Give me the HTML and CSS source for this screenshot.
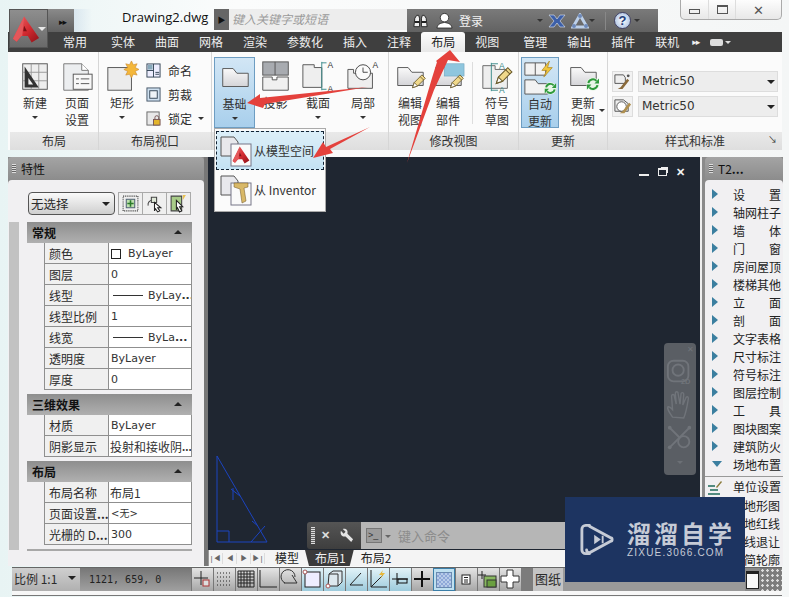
FILE: index.html
```html
<!DOCTYPE html>
<html lang="zh">
<head>
<meta charset="utf-8">
<title>Drawing2.dwg</title>
<link rel="stylesheet" href="styles.css">
</head>
<body>
<svg class="defs" width="0" height="0">
  <defs>
    <linearGradient id="redg" x1="0" y1="0" x2="1" y2="1"><stop offset="0" stop-color="#ee6a6c"/><stop offset=".55" stop-color="#d22a30"/><stop offset="1" stop-color="#8e1218"/></linearGradient>
    <linearGradient id="sheetg" x1="0" y1="0" x2="0" y2="1"><stop offset="0" stop-color="#fafafa"/><stop offset="1" stop-color="#d4d4d8"/></linearGradient>
    <symbol id="sheet" viewBox="0 0 36 36"><path d="M5 8h11l4 5h12v14H5z" fill="url(#sheetg)" stroke="#555" stroke-width="1"/></symbol>
    <symbol id="pencil" viewBox="0 0 20 20"><path d="M3 17l2-6L14 2l4 4-9 9z" fill="#f0d88a" stroke="#6a5a2a"/><path d="M3 17l2-6 4 4z" fill="#fff" stroke="#6a5a2a"/><path d="M12 4l4 4" stroke="#6a5a2a"/></symbol>
    <symbol id="refresh" viewBox="0 0 14 14"><circle cx="7" cy="7" r="6.500" fill="#e8f5e8"/><path d="M2.500 6A4.600 4.600 0 0 1 10.500 3.800" fill="none" stroke="#2f9a3c" stroke-width="2"/><path d="M13 1.500v5H8.500z" fill="#2f9a3c"/><path d="M11.500 8A4.600 4.600 0 0 1 3.500 10.200" fill="none" stroke="#2f9a3c" stroke-width="2"/><path d="M1 12.500v-5h4.500z" fill="#2f9a3c"/></symbol>
    <symbol id="acad" viewBox="0 0 30 30"><path d="M13 1L29 24l-8 5-4-7H10l-5 6-4-3z" fill="url(#redg)"/><path d="M13 1L1 25l4 3 5-6h1z" fill="#e4575a"/><path d="M13 11l-1 6h4z" fill="#7c1216"/></symbol>
  </defs>
</svg>
<div class="window">
  <header class="titlebar">
    <div class="app-button"><svg class="app-a" viewBox="0 0 30 30"><use href="#acad"/></svg><span class="app-caret"></span></div>
    <div class="qat"><span class="chevrons">&#9656;&#9656;</span></div>
    <div class="doc-title">Drawing2.dwg</div>
    <div class="search-arrow"><span>&#9654;</span></div>
    <div class="search">键入关键字或短语</div>
    <div class="infocenter">
      <svg class="ic-bino" viewBox="0 0 18 16"><path d="M2 14l1-9 2-3h2l1 3v9zM10 14V5l1-3h2l2 3 1 9z" fill="#eee" stroke="#222"/><path d="M3 9h5M10 9h5" stroke="#222" stroke-width="2"/></svg>
      <svg class="ic-user" viewBox="0 0 18 18"><circle cx="9" cy="6" r="4.500" fill="#fff" stroke="#333"/><path d="M1 17c1-5 4-5 8-6 4 1 7 1 8 6z" fill="#fff" stroke="#333"/></svg>
      <span class="login">登录</span>
      <span class="mini-caret first"></span>
      <svg class="ic-x" viewBox="0 0 18 14"><path d="M1 1h5l3 4 3-4h5l-5 6 5 6h-5l-3-4-3 4H1l5-6z" fill="#3c5fa8" stroke="#dfe7f5" stroke-width=".6"/></svg>
      <svg class="ic-tri" viewBox="0 0 18 16"><path d="M9 2L2 14h14z" fill="none" stroke="#bcd0ea" stroke-width="3"/><circle cx="9" cy="3" r="2" fill="#6d88b8"/><circle cx="3" cy="13" r="2" fill="#6d88b8"/><circle cx="15" cy="13" r="2" fill="#6d88b8"/></svg>
      <span class="mini-caret"></span>
      <span class="ic-sep"></span>
      <span class="help">?</span>
      <span class="mini-caret"></span>
    </div>
    <div class="wincontrols">
      <div class="wc wc-min"><span></span></div>
      <div class="wc wc-max"><span></span></div>
      <div class="wc wc-close">&#10005;</div>
    </div>
  </header>

  <nav class="tabs">
    <span class="tab sp">常用</span><span class="tab">实体</span><span class="tab">曲面</span><span class="tab">网格</span><span class="tab">渲染</span><span class="tab">参数化</span><span class="tab">插入</span><span class="tab">注释</span><span class="tab active">布局</span><span class="tab sp">视图</span><span class="tab">管理</span><span class="tab">输出</span><span class="tab">插件</span><span class="tab">联机</span>
    <span class="tab-more">&#9656;&#9656;</span><span class="tab-pill"></span><span class="mini-caret white"></span>
  </nav>

  <section class="ribbon">
    <div class="panel p1">
      <div class="panel-body">
        <div class="big w38"><svg class="bigicon" viewBox="0 0 36 36"><rect x="5" y="4" width="26" height="27" fill="#eee" stroke="#555"/><path d="M14 4v27M22 4v27M5 13h26M5 22h26" stroke="#999"/><path d="M7 7l15 22H7z" fill="#333"/><path d="M11 19l5 7h-5z" fill="#eee"/></svg><span class="lbl">新建</span><i class="caret"></i></div>
        <div class="big w38 ml4"><svg class="bigicon" viewBox="0 0 36 36"><path d="M4 4h19l7 7v21H4z" fill="#eceef0" stroke="#777"/><path d="M23 4v7h7" fill="#fff" stroke="#777"/><rect x="14" y="15" width="20" height="16" fill="#f8f8f8" stroke="#555"/><path d="M17 20h3M22 20h9M17 25h3M22 25h9" stroke="#555"/></svg><span class="lbl">页面<br>设置</span></div>
      </div>
      <div class="panel-title">布局</div>
    </div>
    <div class="panel p2">
      <div class="panel-body">
        <div class="big w38"><svg class="bigicon" viewBox="0 0 36 36"><rect x="3" y="8" width="25" height="24" fill="#ececec" stroke="#555"/><path d="M28 1l2 4 4-1-2 4 4 2-4 2 2 4-4-1-2 4-2-4-4 1 2-4-4-2 4-2-2-4 4 1z" fill="#f4b73a" stroke="#c8842a" stroke-width=".6"/></svg><span class="lbl">矩形</span><i class="caret"></i></div>
        <div class="smalls">
          <div class="small"><svg class="sic" viewBox="0 0 16 16"><rect x="1" y="1" width="14" height="14" fill="#eef" stroke="#345"/><path d="M1 8h7M8 1v14M10 10h4M10 12h4" stroke="#345"/><rect x="2" y="2" width="5" height="5" fill="#8ab"/></svg><span>命名</span></div>
          <div class="small"><svg class="sic" viewBox="0 0 16 16"><rect x="1" y="1" width="14" height="14" fill="#cfe0f0" stroke="#456"/><rect x="4" y="4" width="8" height="8" fill="#eef3f8" stroke="#345"/></svg><span>剪裁</span></div>
          <div class="small"><svg class="sic" viewBox="0 0 16 16"><rect x="1" y="1" width="13" height="14" fill="#e8e8e8" stroke="#666"/><rect x="8" y="9" width="7" height="6" fill="#e3b52c" stroke="#755"/><path d="M9.500 9V7a2 2 0 0 1 4 0v2" fill="none" stroke="#755"/></svg><span>锁定</span><i class="caret side"></i></div>
        </div>
      </div>
      <div class="panel-title">布局视口</div>
    </div>
    <div class="panel p3">
      <div class="panel-body">
        <div class="big w41 lit"><svg class="bigicon" viewBox="0 0 36 36"><use href="#sheet"/></svg><span class="lbl">基础</span><i class="caret"></i></div>
        <div class="big w41"><svg class="bigicon" viewBox="0 0 36 36"><rect x="4" y="2" width="27" height="14" fill="#a8abb0" stroke="#555"/><path d="M17 2v14" stroke="#555"/><path d="M4 18h10v3h5v-3h12v14H4z" fill="#f0f0f0" stroke="#555"/></svg><span class="lbl">投影</span></div>
        <div class="big w44"><svg class="bigicon" viewBox="0 0 36 36"><path d="M2 5h12v3h8v21H2z" fill="#eee" stroke="#555"/><path d="M22 2v30" stroke="#3a8a8a"/><path d="M22 3h5M22 31h5" stroke="#3a8a8a"/><text x="28" y="8" class="svgmini">A</text><text x="28" y="34" class="svgmini">A</text></svg><span class="lbl">截面</span><i class="caret"></i></div>
        <div class="big w46"><svg class="bigicon" viewBox="0 0 36 36"><path d="M2 10h6v4h20v16H2z" fill="#eee" stroke="#555"/><circle cx="18" cy="13" r="8" fill="#fbfbfb" stroke="#444"/><path d="M18 8v5h5" fill="none" stroke="#444"/><text x="28" y="8" class="svgmini">A</text></svg><span class="lbl">局部</span><i class="caret"></i></div>
      </div>
      <div class="panel-title"></div>
    </div>
    <div class="panel p4">
      <div class="panel-body">
        <div class="big w38"><svg class="bigicon" viewBox="0 0 36 36"><use href="#sheet"/><use href="#pencil" x="18" y="13" width="18" height="20"/></svg><span class="lbl">编辑<br>视图</span></div>
        <div class="big w38"><svg class="bigicon" viewBox="0 0 36 36"><use href="#sheet"/><rect x="14" y="4" width="21" height="13" fill="#8fc6de" stroke="#6ea4bc" stroke-width=".6"/><use href="#pencil" x="18" y="13" width="18" height="20"/></svg><span class="lbl">编辑<br>部件</span></div>
        <span class="vsep"></span>
        <div class="big w38"><svg class="bigicon" viewBox="0 0 36 36"><path d="M3 6h13v4h13v20H3z" fill="#eee" stroke="#666"/><path d="M12 3v30" stroke="#3a8a8a"/><path d="M12 4h7M12 32h7" stroke="#3a8a8a"/><text x="20" y="9" class="svgmini teal">A</text><text x="20" y="35" class="svgmini teal">A</text><use href="#pencil" x="14" y="6" width="22" height="22"/></svg><span class="lbl">符号<br>草图</span></div>
      </div>
      <div class="panel-title">修改视图</div>
    </div>
    <div class="panel p5">
      <div class="panel-body">
        <div class="big w38 lit"><svg class="bigicon" viewBox="0 0 36 36"><path d="M2 2h22v13H2zM13 2v13" fill="#f2f2f2" stroke="#555"/><path d="M28 0l-8 10h5l-3 7 9-10h-5z" fill="#f0c63c" stroke="#a8801c" stroke-width=".7"/><path d="M2 20h11l3 4h10v11H2z" fill="#f2f2f2" stroke="#555"/><use href="#refresh" x="22" y="22" width="14" height="14"/></svg><span class="lbl">自动<br>更新</span></div>
        <div class="big w40"><svg class="bigicon" viewBox="0 0 36 36"><use href="#sheet"/><use href="#refresh" x="21" y="18" width="15" height="15"/></svg><span class="lbl">更新<br>视图</span><i class="caret right"></i></div>
      </div>
      <div class="panel-title">更新</div>
    </div>
    <div class="panel p6">
      <div class="panel-body styles">
        <div class="style-row"><span class="style-icon"><svg viewBox="0 0 20 20"><path d="M2 3h9l2 3v6H2z" fill="#eee" stroke="#555"/><path d="M5 18l3-2 7-9 2 2-7 9z" fill="#8a6a3a"/><circle cx="16" cy="4" r="1.500" fill="#555"/></svg></span><div class="combo">Metric50<i class="combo-caret"></i></div></div>
        <div class="style-row"><span class="style-icon"><svg viewBox="0 0 20 20"><path d="M2 3h9l5 4v8H2z" fill="#eee" stroke="#555"/><circle cx="9" cy="10" r="5" fill="#fff" stroke="#555"/><path d="M7 17l3-2 7-9 2 2-7 9z" fill="#b09050"/></svg></span><div class="combo">Metric50<i class="combo-caret"></i></div></div>
      </div>
      <div class="panel-title">样式和标准<span class="launcher">&#8600;</span></div>
    </div>
  </section>

  <main class="workspace">
    <aside class="palette left-palette">
      <div class="pal-head"><span class="grip"></span><span>特性</span></div>
      <div class="pal-body props">
        <div class="selector">
          <div class="sel-box">无选择<i class="combo-caret"></i></div>
          <div class="sel-btns">
            <span class="sel-btn"><svg viewBox="0 0 18 18"><rect x="2" y="2" width="14" height="14" fill="none" stroke="#333" stroke-dasharray="1 1"/><rect x="5" y="5" width="8" height="8" fill="#bfe0b0" stroke="#567"/><path d="M9 6v6M6 9h6" stroke="#2a7a2a" stroke-width="1.500"/></svg></span>
            <span class="sel-btn"><svg viewBox="0 0 18 18"><path d="M3 11a4 4 0 0 1 4-5" fill="none" stroke="#444"/><path d="M6 3h5v5H6z" fill="#dfe8d8" stroke="#444"/><path d="M9 8l6 5-3 0 2 3-2 1-2-3-1 2z" fill="#fff" stroke="#222"/></svg></span>
            <span class="sel-btn"><svg viewBox="0 0 18 18"><path d="M2 2h10v14H2z" fill="#a8cc88" stroke="#444"/><path d="M7 6l6 6-3 0 2 4-2 1-2-4-1 2z" fill="#fff" stroke="#222"/><path d="M13 1l3 0-3 5z" fill="#e8c050"/></svg></span>
          </div>
        </div>
        <div class="prop-wrap">
          <div class="side-scroll"></div>
          <div class="prop-groups">
            <section class="group">
              <h3 class="group-head">常规<i class="up"></i></h3>
              <div class="row"><span class="k">颜色</span><span class="v"><i class="swatch"></i>ByLayer</span></div>
              <div class="row"><span class="k">图层</span><span class="v">0</span></div>
              <div class="row"><span class="k">线型</span><span class="v"><i class="dash"></i>ByLay<b>...</b></span></div>
              <div class="row"><span class="k">线型比例</span><span class="v">1</span></div>
              <div class="row"><span class="k">线宽</span><span class="v"><i class="dash"></i>ByLa<b>...</b></span></div>
              <div class="row"><span class="k">透明度</span><span class="v">ByLayer</span></div>
              <div class="row"><span class="k">厚度</span><span class="v">0</span></div>
            </section>
            <section class="group">
              <h3 class="group-head">三维效果<i class="up"></i></h3>
              <div class="row"><span class="k">材质</span><span class="v">ByLayer</span></div>
              <div class="row"><span class="k">阴影显示</span><span class="v cjk">投射和接收阴<b>...</b></span></div>
            </section>
            <section class="group">
              <h3 class="group-head">布局<i class="up"></i></h3>
              <div class="row"><span class="k">布局名称</span><span class="v cjk">布局1</span></div>
              <div class="row"><span class="k">页面设置<b>...</b></span><span class="v small-v">&lt;无&gt;</span></div>
              <div class="row"><span class="k">光栅的 D<b>...</b></span><span class="v">300</span></div>
            </section>
            <div class="group-end"></div>
          </div>
        </div>
      </div>
    </aside>

    <div class="center">
      <div class="canvas">
        <div class="vp-controls"><span class="vp-min"></span><span class="vp-max"></span><span class="vp-close">&#10005;</span></div>
        <svg class="ucs" viewBox="0 0 54 90"><path d="M1 1L51 87H1zM1 76h12v11M35 87l14-16M24 41l-9-7M17 33v12M36 66l6 5" fill="none" stroke="#1c44c0" stroke-width="1"/></svg>
        <div class="navbar">
          <span class="nb-close">&#10005;</span>
          <svg class="nb-i" viewBox="0 0 30 30"><rect x="2" y="3" width="22" height="22" rx="6" fill="none" stroke="#70747a" stroke-width="2"/><circle cx="13" cy="13" r="6" fill="none" stroke="#70747a" stroke-width="2"/><text x="16" y="28" class="nb-t">2D</text></svg>
          <svg class="nb-i" viewBox="0 0 30 30"><path d="M7 28c-4-6-6-9-5-11 2-1 4 2 5 3L6 6c0-3 3-3 3 0l2 8-1-11c0-3 3-3 3 0l2 11 1-10c0-3 3-3 3 0l-1 11 3-7c1-3 3-2 3 0-1 6-2 14-5 21z" fill="none" stroke="#70747a" stroke-width="1.500"/></svg>
          <svg class="nb-i" viewBox="0 0 30 30"><path d="M4 4l19 19M25 4L4 25" stroke="#70747a" stroke-width="2"/><circle cx="4" cy="4" r="2" fill="#70747a"/><circle cx="25" cy="4" r="2" fill="#70747a"/><circle cx="4" cy="25" r="2" fill="#70747a"/><circle cx="19" cy="19" r="6" fill="#5a5e64" stroke="#70747a" stroke-width="2"/></svg>
          <span class="nb-caret"></span>
        </div>
        <div class="cmdline">
          <div class="cmd-left"><span class="grip cmd-grip"></span><span class="cmd-x">&#10005;</span><svg class="cmd-wrench" viewBox="0 0 16 16"><path d="M2 3l3 3 2-2-3-3c3-1 6 1 5 5l6 6-2 3-6-6c-4 1-6-2-5-6z" fill="#e4e4e4"/></svg></div>
          <div class="cmd-right"><span class="cmd-prompt">&gt;_</span><i class="cmd-caret"></i><span class="cmd-text">键入命令</span></div>
        </div>
      </div>
      <div class="layout-tabs">
        <span class="lnav">|&#9664;</span><span class="lnav">&#9664;</span><span class="lnav">&#9654;</span><span class="lnav">&#9654;|</span>
        <span class="ltab first">模型</span><span class="ltab on">布局1</span><span class="ltab last">布局2</span>
      </div>
    </div>

    <aside class="palette right-palette">
      <div class="pal-head"><span class="grip"></span><span>T2<b>...</b></span></div>
      <ul class="pal-body tool-list">
        <li><i></i><span class="just">设<em>置</em></span></li>
        <li><i></i><span>轴网柱子</span></li>
        <li><i></i><span class="just">墙<em>体</em></span></li>
        <li><i></i><span class="just">门<em>窗</em></span></li>
        <li><i></i><span>房间屋顶</span></li>
        <li><i></i><span>楼梯其他</span></li>
        <li><i></i><span class="just">立<em>面</em></span></li>
        <li><i></i><span class="just">剖<em>面</em></span></li>
        <li><i></i><span>文字表格</span></li>
        <li><i></i><span>尺寸标注</span></li>
        <li><i></i><span>符号标注</span></li>
        <li><i></i><span>图层控制</span></li>
        <li><i></i><span class="just">工<em>具</em></span></li>
        <li><i></i><span>图块图案</span></li>
        <li><i></i><span>建筑防火</span></li>
        <li class="open"><i></i><span>场地布置</span></li>
        <li class="sep"><svg class="unit-ic" viewBox="0 0 16 16"><path d="M1 7h7M1 15h12M3 11h8" stroke="#1e6a5a" stroke-width="1.500"/><path d="M9 8l5-6 1 1-5 6z" fill="#8a7a3a"/></svg><span>单位设置</span></li>
        <li class="plain"><span>地形图</span></li>
        <li class="plain"><span>地红线</span></li>
        <li class="plain"><span>线退让</span></li>
        <li class="plain"><span>简轮廓</span></li>
      </ul>
    </aside>
  </main>

  <footer class="statusbar">
    <div class="scale">比例 1:1<i class="combo-caret"></i></div>
    <div class="coords">1121, 659, 0</div>
    <div class="sb"><svg viewBox="0 0 22 22"><path d="M10 3v14M3 10h14" stroke="#222"/><rect x="12" y="12" width="6" height="6" fill="#ddd" stroke="#a33"/></svg></div>
    <div class="sb"><svg viewBox="0 0 22 22"><path d="M4 5h14M4 9h14M4 13h14M4 17h14" stroke="#222" stroke-dasharray="1 2"/></svg></div>
    <div class="sb"><svg viewBox="0 0 22 22"><path d="M3 3h16v16H3zM6 3v16M9 3v16M12 3v16M15 3v16M3 6h16M3 9h16M3 12h16M3 15h16" fill="none" stroke="#222"/></svg></div>
    <div class="sb"><svg viewBox="0 0 22 22"><path d="M3 2v17h17" fill="none" stroke="#222"/></svg></div>
    <div class="sb"><svg viewBox="0 0 22 22"><path d="M6 15a7 7 0 1 1 10-6M5 15h13L13 7" fill="none" stroke="#333"/></svg></div>
    <div class="sb blue"><svg viewBox="0 0 22 22"><rect x="4" y="4" width="15" height="15" fill="#eef" stroke="#222"/><circle cx="4" cy="4" r="2" fill="#fff" stroke="#a55"/></svg></div>
    <div class="sb blue"><svg viewBox="0 0 22 22"><path d="M6 6l4-3h9v11l-4 4H5z" fill="#dde8ee" stroke="#333"/><path d="M6 6h9v12" fill="none" stroke="#333"/><circle cx="5" cy="18" r="2" fill="#fff" stroke="#a55"/></svg></div>
    <div class="sb blue"><svg viewBox="0 0 22 22"><path d="M16 5L5 17h13" fill="none" stroke="#222"/></svg></div>
    <div class="sb blue"><svg viewBox="0 0 22 22"><path d="M4 2v17h16M4 19L16 7" fill="none" stroke="#222"/><path d="M16 2l-4 5h3l-2 4 5-6h-3z" fill="#e8b838"/></svg></div>
    <div class="sb blue"><svg viewBox="0 0 22 22"><path d="M8 5v12M3 11h16" stroke="#111"/><rect x="9" y="11" width="9" height="4" fill="none" stroke="#111"/></svg></div>
    <div class="sb"><svg viewBox="0 0 22 22"><path d="M11 3v16M3 11h16" stroke="#111" stroke-width="2"/></svg></div>
    <div class="sb lit-box"><span></span></div>
    <div class="sb"><svg viewBox="0 0 22 22"><rect x="7" y="7" width="8" height="9" fill="#fff" stroke="#222"/><path d="M9 9.500h4M9 12h4M9 14h4" stroke="#222"/></svg></div>
    <div class="sb"><svg viewBox="0 0 22 22"><path d="M5 3v8M1 7h8" stroke="#222"/><rect x="7" y="8" width="12" height="11" fill="#88b860" stroke="#333"/><rect x="10" y="12" width="9" height="7" fill="#6aa040" stroke="#333"/></svg></div>
    <div class="sb"><svg viewBox="0 0 22 22"><path d="M8 2h6v6h6v6h-6v6H8v-6H2V8h6z" fill="#fff" stroke="#333"/></svg></div>
    <div class="sb-gap"></div>
    <div class="paper">图纸</div>
    <div class="sb-fill"></div>
    <div class="sb-window"><span></span></div>
    <div class="sb-grip"></div>
  </footer>

  <div class="popup">
    <div class="pop-item hot"><svg class="pop-ic" viewBox="0 0 34 32"><path d="M2 2h13l4 5v14H2z" fill="#e8e8ec" stroke="#555"/><rect x="12" y="9" width="20" height="22" fill="#fafafa" stroke="#778"/><use href="#acad" x="13" y="10" width="18" height="20"/></svg><span>从模型空间</span></div>
    <div class="pop-item"><svg class="pop-ic" viewBox="0 0 34 32"><path d="M2 2h13l4 5v14H2z" fill="#e8e8ec" stroke="#555"/><rect x="12" y="9" width="20" height="22" fill="#fafafa" stroke="#778"/><path d="M15 9h14v4l-4 1 2 13-4 2-2-14-6-2z" fill="#d8b868" stroke="#6a5020" stroke-width=".5"/></svg><span>从 Inventor</span></div>
  </div>

  <svg class="arrows" viewBox="0 0 789 597">
    <path d="M247 103L260 94l0 4 108-11-103 17-2 4z"/>
    <path d="M313 158L323 142l3 5 44-20-40 22 3 4z"/>
    <path d="M407 163L432 78l5-16-1-1 14-11 10 12-12-2-14 30z"/>
  </svg>

  <div class="watermark">
    <svg class="wm-logo" viewBox="0 0 36 34"><path d="M10 2H6a4 4 0 0 0-4 4v22a4 4 0 0 0 4 4h4" fill="none" stroke="#c6cbd6" stroke-width="3" stroke-linecap="round"/><path d="M10 3l22 12a2 2 0 0 1 0 4L10 31a3 3 0 0 1-3-3" fill="none" stroke="#c6cbd6" stroke-width="3" stroke-linecap="round"/><path d="M15 12l7 5-7 5z" fill="#c6cbd6"/><path d="M24 13v8" stroke="#c6cbd6" stroke-width="2"/></svg>
    <div class="wm-text"><div class="wm-cn">溜溜自学</div><div class="wm-en">ZIXUE.3066.COM</div></div>
  </div>
</div>
</body>
</html>
```

FILE: styles.css
```css
* { box-sizing: border-box; }
html, body { margin: 0; padding: 0; }
body { width: 789px; height: 597px; overflow: hidden; background: #f2f6f6; font-family: "Noto Sans CJK SC", "Liberation Sans", sans-serif; font-size: 12px; color: #2b2b2b; }
.defs { position: absolute; }
i { display: block; font-style: normal; }
.svgmini { font: 9px "Liberation Sans", sans-serif; fill: #333; }
.svgmini.teal { fill: #3a8a8a; }

.window { position: relative; width: 789px; height: 597px; padding: 9px 7px 0 8px; display: flex; flex-direction: column; overflow: hidden; background: linear-gradient(90deg, #e8f4f4, #fbfcfc 30%, #f4f6f6); }

/* title bar */
.titlebar { height: 23px; display: flex; align-items: flex-start; position: relative; flex: none; }
.app-button { position: absolute; left: 1px; top: 0; width: 39px; height: 39px; background: linear-gradient(#8e8e8e, #6a6a6a); border: 1px solid #555; z-index: 3; }
.app-a { position: absolute; left: 2px; top: 2px; width: 28px; height: 35px; }
.app-caret { position: absolute; right: 1px; top: 17px; border: 4px solid transparent; border-top-color: #e8e8e8; }
.qat { margin-left: 40px; width: 44px; height: 23px; background: linear-gradient(#8a8a8a, #606060) 0 0 / 26px 100% no-repeat, linear-gradient(90deg, #bcd0e4, transparent); padding: 5px 0 0 11px; flex: none; line-height: 12px; }
.chevrons { font: 9px/12px "DejaVu Sans", sans-serif; letter-spacing: -1px; color: #111; }
.doc-title { margin-left: 30px; width: 92px; font: 13px/16px "Open Sans", "Liberation Sans", sans-serif; color: #111; flex: none; }
.search-arrow { width: 15px; height: 21px; background: #666; color: #111; font-size: 8px; text-align: center; line-height: 21px; flex: none; }
.search { width: 178px; height: 21px; background: #ededed; color: #9a9a9a; font-style: italic; line-height: 20px; padding-left: 3px; flex: none; }
.infocenter { width: 251px; height: 23px; background: linear-gradient(#7a7a7a, #626262); display: flex; align-items: center; flex: none; position: relative; }
.ic-bino { width: 17px; height: 16px; margin-left: 5px; flex: none; }
.ic-user { width: 17px; height: 17px; margin-left: 7px; flex: none; }
.login { color: #f2f2f2; margin-left: 6px; width: 78px; flex: none; }
.mini-caret { width: 0; height: 0; border: 3px solid transparent; border-top-color: #333; margin: 3px 0 0 0; flex: none; }
.mini-caret.first { margin-right: 5px; }
.mini-caret.white { border-top-color: #ddd; }
.ic-x { width: 18px; height: 14px; flex: none; }
.ic-tri { width: 18px; height: 16px; margin-left: 5px; flex: none; }
.ic-sep { width: 1px; height: 18px; background: #888; margin: 0 8px 0 10px; flex: none; }
.help { width: 17px; height: 17px; border-radius: 50%; background: radial-gradient(#fff, #9bb6dc); border: 1px solid #446; color: #26407a; font: bold 13px/15px "Liberation Sans", sans-serif; text-align: center; margin-right: 3px; flex: none; }
.wincontrols { position: absolute; left: 672px; top: -9px; width: 102px; height: 20px; display: flex; background: linear-gradient(#fdfdfd, #e8e8e8); border: 1px solid #aaa; border-top: 0; border-radius: 0 0 5px 5px; }
.wc { border-right: 1px solid #ddd; display: flex; align-items: center; justify-content: center; color: #555; }
.wc-min { width: 28px; }
.wc-max { width: 27px; }
.wc-close { flex: 1; border: 0; font-size: 13px; }
.wc-min span { width: 11px; height: 5px; border: 1px solid #555; margin-top: 4px; }
.wc-max span { width: 11px; height: 9px; border: 1px solid #555; border-top-width: 2px; }

/* tabs */
.tabs { height: 20px; flex: none; background: #3f3f3f; padding-left: 45px; display: flex; align-items: center; color: #eee; line-height: 20px; }
.tab { padding: 0 10px; flex: none; height: 20px; }
.tab.sp { margin-right: 4px; }
.tab.active { background: linear-gradient(#fdfdfd, #e8e8e8); color: #222; border-radius: 3px 3px 0 0; }
.tab-more { font: 9px/12px "DejaVu Sans", sans-serif; letter-spacing: -1px; margin-left: 3px; color: #eee; }
.tab-pill { width: 13px; height: 7px; background: #ddd; border-radius: 2px; margin: 0 2px 0 11px; }

/* ribbon */
.ribbon { height: 98px; flex: none; display: flex; background: #fbfbfb; padding-left: 2px; }
.panel { display: flex; flex-direction: column; border-right: 1px solid #d6d6d6; flex: none; }
.p1 { width: 89px; }
.p2 { width: 113px; }
.p3 { width: 177px; }
.p4 { width: 130px; }
.p5 { width: 89px; }
.p6 { width: 174px; border: 0; }
.panel-body { flex: 1; display: flex; align-items: flex-start; padding: 5px 2px 0; min-height: 0; }
.p1 .panel-body { padding-left: 6px; }
.p2 .panel-body { padding-left: 4px; }
.panel-title { height: 18px; background: linear-gradient(#e9e9e9, #dedede); text-align: center; line-height: 18px; color: #333; position: relative; flex: none; }
.launcher { position: absolute; right: 5px; top: -1px; font-size: 9px; }
.big { flex: none; height: 71px; display: flex; flex-direction: column; align-items: center; text-align: center; position: relative; }
.w38 { width: 38px; } .w40 { width: 40px; } .w41 { width: 41px; } .w44 { width: 44px; } .w46 { width: 46px; }
.ml4 { margin-left: 4px; }
.bigicon { width: 34px; height: 34px; flex: none; margin-top: 3px; }
.lbl { line-height: 17px; font-size: 12px; color: #333; }
.caret { width: 0; height: 0; border: 3px solid transparent; border-top-color: #333; margin-top: 5px; }
.caret.side { margin: 3px 0 0 6px; }
.caret.right { position: absolute; right: -2px; top: 47px; }
.lit { background: linear-gradient(#d2e6f5, #a8cfec); border: 1px solid #6d9dc2; }
.vsep { width: 1px; height: 62px; background: #ddd; margin: 5px 5px 0 5px; flex: none; }
.p5 .w40 { margin-left: 4px; }
.smalls { margin-left: 5px; padding-top: 1px; display: flex; flex-direction: column; }
.small { height: 24px; display: flex; align-items: center; white-space: nowrap; }
.sic { width: 15px; height: 15px; margin-right: 7px; flex: none; }
.styles { flex-direction: column; padding: 19px 0 0 4px; gap: 4px; }
.style-row { display: flex; align-items: center; gap: 5px; height: 21px; }
.style-icon { width: 21px; height: 21px; border: 1px solid #ddd; background: #f2f2f2; display: block; }
.style-icon svg { width: 19px; height: 19px; display: block; }
.combo { width: 140px; height: 21px; background: #ededed; border: 1px solid #ddd; font: 12px/19px "DejaVu Sans", sans-serif; padding-left: 3px; color: #333; position: relative; }
.combo-caret { position: absolute; right: 2px; top: 8px; border: 4px solid transparent; border-top-color: #222; border-bottom: 0; width: 0; height: 0; }

/* workspace */
.workspace { margin-top: 7px; flex: none; height: 409px; display: flex; position: relative; background: #8a8a8a; }
.palette { flex: none; display: flex; flex-direction: column; background: #8a8a8a; }
.left-palette { width: 200px; border-right: 4px solid #777; }
.right-palette { width: 78px; margin-left: 3px; }
.pal-head { height: 23px; display: flex; align-items: center; padding-left: 4px; background: linear-gradient(#a4a4a4, #8c8c8c); color: #111; flex: none; border-radius: 4px 4px 0 0; font: 12px "Noto Sans CJK SC", sans-serif; }
.grip { width: 4px; height: 9px; margin-right: 5px; flex: none; background: repeating-linear-gradient(#ddd 0 1px, #666 1px 2px); }
.pal-body { flex: 1; background: #f1f0f2; border-radius: 4px 4px 0 0; margin: 0 1px 0 0; min-height: 0; }
.pal-head b, .row b, .v b { font-weight: bold; }
.props { display: flex; flex-direction: column; margin: 0; }
.selector { display: flex; padding: 12px 0 0 20px; height: 42px; flex: none; }
.sel-box { width: 87px; height: 23px; border: 1px solid #555; border-radius: 4px; background: linear-gradient(#fafafa, #cfcfcf); line-height: 21px; padding-left: 2px; position: relative; font-size: 12.500px; }
.sel-box .combo-caret { right: 4px; top: 9px; }
.sel-btns { display: flex; margin-left: 3px; }
.sel-btn { width: 25px; height: 23px; border: 1px solid #aaa; margin-right: -1px; background: #efefef; display: block; }
.sel-btn svg { display: block; width: 19px; height: 19px; margin: 1px auto; }
.prop-wrap { display: flex; flex: 1; min-height: 0; }
.side-scroll { width: 10px; margin: 0 8px 11px 1px; height: 328px; background: #c2c2c2; flex: none; }
.prop-groups { width: 165px; flex: none; }
.group { margin-bottom: 4px; }
.group-head { height: 21px; margin: 0; background: linear-gradient(#8e8e8e, #b0b0b0); font: bold 12px/21px "Noto Sans CJK SC", sans-serif; padding-left: 5px; color: #111; position: relative; }
.up { position: absolute; right: 10px; top: 8px; border: 4px solid transparent; border-bottom-color: #222; border-top: 0; width: 0; height: 0; }
.row { height: 21px; margin-left: 17px; display: flex; border: 1px solid #8f8f8f; border-top: 0; background: #fff; line-height: 21px; white-space: nowrap; overflow: hidden; }
.k { width: 64px; flex: none; background: #f0f0f0; border-right: 1px solid #8f8f8f; padding-left: 4px; overflow: hidden; }
.v { flex: 1; padding: 1px 0 0 2px; font-family: "DejaVu Sans", "Noto Sans CJK SC", sans-serif; font-size: 11px; display: flex; align-items: center; overflow: hidden; color: #333; }
.v.cjk { font-family: "Noto Sans CJK SC", sans-serif; font-size: 12px; padding-left: 1px; }
.v.cjk b { font-size: 10px; }
.small-v { font-size: 10px; }
.swatch { width: 10px; height: 10px; border: 1px solid #222; background: #fff; margin: 0 7px 0 0; }
.dash { width: 30px; height: 1px; background: #333; margin: 0 5px 0 2px; flex: none; }
.group-end { height: 2px; background: #a8a8a8; }

/* center */
.center { width: 494px; flex: none; display: flex; flex-direction: column; border-right: 2px solid #eee; }
.canvas { height: 393px; background: #1f2631; position: relative; flex: none; }
.vp-controls { position: absolute; left: 431px; top: 10px; display: flex; align-items: center; gap: 9px; color: #f2f2f2; }
.vp-min { width: 10px; height: 2px; background: #eee; margin-top: 6px; }
.vp-max { width: 9px; height: 8px; border: 1px solid #eee; border-top-width: 2px; box-shadow: 2px -2px 0 -1px #eee; }
.vp-close { font: bold 11px/10px "Liberation Sans", sans-serif; }
.ucs { position: absolute; left: 8px; top: 298px; width: 54px; height: 90px; }
.navbar { position: absolute; left: 456px; top: 186px; width: 32px; height: 132px; background: #5a5e64; border-radius: 4px; display: flex; flex-direction: column; align-items: center; padding-top: 15px; gap: 5px; }
.nb-close { position: absolute; right: 2px; top: 0; font-size: 8px; color: #70747a; }
.nb-i { width: 28px; height: 28px; flex: none; }
.nb-t { font: bold 8px "Liberation Sans", sans-serif; fill: #70747a; }
.nb-caret { border: 3px solid transparent; border-top-color: #6c7076; margin-top: 4px; }
.cmdline { position: absolute; left: 99px; top: 365px; width: 390px; height: 27px; display: flex; }
.cmd-left { width: 54px; flex: none; background: linear-gradient(#555, #3e3e3e); display: flex; align-items: center; padding-left: 4px; border-radius: 3px 0 0 3px; }
.cmd-grip { height: 17px; margin-right: 6px; }
.cmd-x { color: #ddd; font: bold 11px "Liberation Sans", sans-serif; }
.cmd-wrench { width: 15px; height: 15px; margin-left: 9px; flex: none; }
.cmd-right { flex: 1; background: #b6b6b6; display: flex; align-items: center; padding-left: 5px; color: #8a8a8a; }
.cmd-prompt { width: 16px; height: 15px; border: 1px solid #777; background: #9c9c9c; font: 9px/13px "Liberation Sans", sans-serif; color: #333; padding-left: 1px; }
.cmd-caret { border: 3px solid transparent; border-top-color: #666; margin: 4px 0 0 3px; }
.cmd-text { margin-left: 7px; font-size: 13px; color: #8c8c8c; }
.layout-tabs { flex: none; height: 16px; background: #f4f4f4; display: flex; align-items: center; border-left: 1px solid #999; color: #222; overflow: hidden; }
.lnav { width: 14px; font: 8px "Liberation Sans", sans-serif; color: #666; text-align: center; flex: none; border-right: 1px solid #ddd; }
.ltab { padding: 0 8px; height: 16px; line-height: 15px; flex: none; }
.ltab.first { margin-left: 2px; padding-right: 6px; }
.ltab.last { padding-left: 7px; }
.ltab.on { background: #3a3a3a; color: #f0f0f0; padding: 0 8px 0 10px; clip-path: polygon(0 0, 100% 0, calc(100% - 4px) 100%, 4px 100%); }

/* tool palette */
.tool-list { list-style: none; padding: 5px 0 0 0; margin: 0; overflow: hidden; font-size: 12px; }
.tool-list li { height: 18px; display: flex; align-items: center; padding-left: 7px; white-space: nowrap; color: #222; }
.tool-list li i { width: 0; height: 0; border: 5px solid transparent; border-left: 6px solid #3b7fa0; border-right: 0; flex: none; margin-right: 15px; }
.tool-list li.open i { border: 5px solid transparent; border-top: 6px solid #3b7fa0; border-bottom: 0; margin-right: 11px; }
.just { width: 48px; display: flex; justify-content: space-between; flex: none; }
.just em { font-style: normal; }
.tool-list li.sep { border-top: 1px solid #999; margin-top: 3px; height: 20px; padding-left: 2px; }
.unit-ic { width: 16px; height: 16px; margin-right: 10px; flex: none; }
.tool-list li.plain { padding-left: 39px; }

/* status bar */
.statusbar { height: 24px; margin-top: 1px; margin-left: 4px; flex: none; display: flex; background: #a2a2a2; border-top: 1px solid #666; box-shadow: 0 4px 0 #f7f7f7, 0 5px 0 #777; }
.scale { width: 68px; background: linear-gradient(#cfcfcf, #b0b0b0); line-height: 22px; padding-left: 2px; font-family: "Noto Sans CJK SC", sans-serif; position: relative; flex: none; }
.scale .combo-caret { right: 4px; top: 8px; }
.coords { width: 111px; flex: none; background: linear-gradient(#777, #a0a0a0); font: 10px/24px "DejaVu Sans Mono", monospace; color: #222; padding-left: 9px; }
.sb { width: 22px; flex: none; border-left: 1px solid #777; background: linear-gradient(#e4e4e4, #a6a6a6); }
.sb svg { display: block; width: 22px; height: 22px; margin-left: -1px; }
.sb.blue { background: linear-gradient(#e2f3f8, #9dcbdc); }
.lit-box { background: #bfe0f0; border: 1px solid #3a7ea8; display: flex; align-items: center; justify-content: center; }
.lit-box span { width: 16px; height: 16px; background: repeating-conic-gradient(#8fa8d8 0 25%, #b8cce8 0 50%) 0 0 / 4px 4px; border: 1px solid #6a8ab0; }
.sb-gap { width: 12px; flex: none; background: #7c7c7c; }
.paper { width: 30px; flex: none; background: #c4c4c4; text-align: center; line-height: 22px; font-size: 13px; }
.sb-fill { flex: 1; background: #9a9a9a; }
.sb-window { width: 15px; flex: none; display: flex; align-items: center; justify-content: center; background: #8a8a8a; }
.sb-window span { width: 13px; height: 18px; background: #fafafa; border: 1px solid #222; border-top-width: 3px; }
.sb-grip { width: 22px; flex: none; background: #7c7c7c radial-gradient(#ddd 1px, transparent 1.500px) 0 0 / 5px 5px; }

/* overlays */
.popup { position: absolute; left: 214px; top: 128px; width: 112px; height: 84px; background: #fbfbfb; border: 1px solid #aaa; z-index: 5; padding: 2px 1px; }
.pop-item { height: 39px; display: flex; align-items: center; gap: 1px; font-size: 12px; color: #333; white-space: nowrap; padding-left: 3px; }
.pop-item.hot { background: linear-gradient(#dceff9, #c4e2f3); border: 1px dashed #123; padding-left: 2px; }
.pop-ic { width: 34px; height: 32px; flex: none; }
.arrows { position: absolute; left: 0; top: 0; width: 789px; height: 597px; z-index: 6; pointer-events: none; }
.arrows path { fill: #e4413c; }
.watermark { position: absolute; left: 565px; top: 497px; width: 180px; height: 85px; background: #1d3461; z-index: 7; display: flex; align-items: flex-start; padding: 26px 0 0 15px; }
.wm-logo { width: 34px; height: 33px; flex: none; }
.wm-text { margin-left: 13px; margin-top: -4px; color: #c6cbd6; }
.wm-cn { font: bold 24px/27px "Noto Sans CJK SC", sans-serif; letter-spacing: 3px; white-space: nowrap; }
.wm-en { font: 10px/13px "Liberation Sans", sans-serif; letter-spacing: 1.200px; white-space: nowrap; }
```
